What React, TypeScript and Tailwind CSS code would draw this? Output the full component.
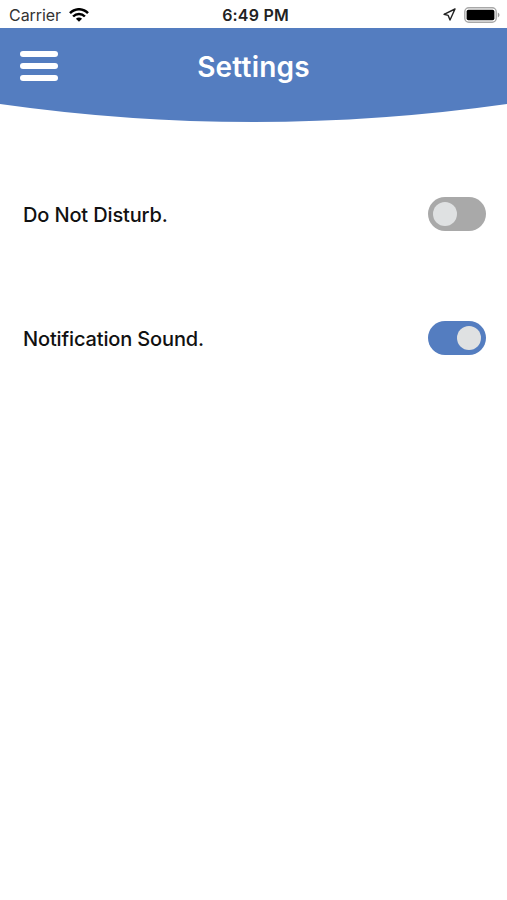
import { useState } from "react";

function StatusBar() {
  return (
    <div className="flex h-7 items-center justify-between bg-white pr-[7px] pl-[9px] pt-px">
      <div className="flex flex-1 items-center gap-2">
        <span className="text-[16px] leading-5 tracking-[-0.05px] text-[#333]">Carrier</span>
        <svg width="20" height="14" viewBox="0 0 20 14" fill="none" stroke="#000" strokeWidth="2.5">
          <path d="M1 5.2C6 -0.1 14 -0.1 19 5.2" />
          <path d="M4.1 8.5C7.4 5.1 12.6 5.1 15.9 8.5" />
          <path d="M6.9 10.8C8.7 9.1 11.3 9.1 13.1 10.8L10 13.7Z" fill="#000" stroke="none" />
        </svg>
      </div>
      <span className="pl-[2px] text-[16px] leading-5 font-semibold tracking-[0.2px] text-[#222]">6:49 PM</span>
      <div className="flex flex-1 items-center justify-end gap-2">
        <svg width="13" height="13" viewBox="0 0 13 13" fill="none" stroke="#222" strokeWidth="1.4" strokeLinejoin="round">
          <path d="M12 1L1 6.3L5.2 7.4L7 12Z" />
        </svg>
        <svg width="36" height="16" viewBox="0 0 36 16">
          <rect x="0.8" y="0.8" width="31.4" height="14.4" rx="4" fill="none" stroke="#a8a8a8" strokeWidth="1.4" />
          <rect x="2.6" y="2.7" width="27.8" height="10.6" rx="1.8" fill="#000" />
          <path d="M33.8 5.6C36 6.4 36 9.6 33.8 10.4Z" fill="#999" />
        </svg>
      </div>
    </div>
  );
}

function Header() {
  return (
    <header>
      <div className="grid h-[76px] grid-cols-[1fr_auto_1fr] items-center bg-[#547dc0] px-5">
        <button aria-label="Menu" className="flex w-[38px] flex-col gap-[6px]">
          <span className="h-[6px] rounded-full bg-white" />
          <span className="h-[6px] rounded-full bg-white" />
          <span className="h-[6px] rounded-full bg-white" />
        </button>
        <h1 className="pt-[2px] text-[28px] leading-9 font-semibold tracking-[0.2px] text-white">Settings</h1>
      </div>
      <svg className="block w-full" height="18" viewBox="0 0 507 18" preserveAspectRatio="none">
        <path d="M0 0Q253.5 36 507 0Z" fill="#547dc0" />
      </svg>
    </header>
  );
}

function SettingRow({ label, initial }: { label: string; initial: boolean }) {
  const [on, setOn] = useState(initial);
  return (
    <div className="flex h-[124px] items-center justify-between pr-[21px] pl-[23px]">
      <span className="pt-px text-[20px] leading-7 font-medium tracking-[-0.14px] text-[#111]">{label}</span>
      <button
        role="switch"
        aria-checked={on}
        aria-label={label}
        onClick={() => setOn(!on)}
        className={
          on
            ? "flex h-[34px] w-[58px] items-center justify-end rounded-full bg-[#547dc0] px-[5px]"
            : "flex h-[34px] w-[58px] items-center justify-start rounded-full bg-[#a9a9a9] px-[5px]"
        }
      >
        <span className="size-6 rounded-full bg-[#dfe1e2]" />
      </button>
    </div>
  );
}

export default function App() {
  return (
    <div className="h-[900px] w-full bg-white font-['Inter',sans-serif]">
      <StatusBar />
      <Header />
      <main className="pt-[30px]">
        <SettingRow label="Do Not Disturb." initial={false} />
        <SettingRow label="Notification Sound." initial={true} />
      </main>
    </div>
  );
}
